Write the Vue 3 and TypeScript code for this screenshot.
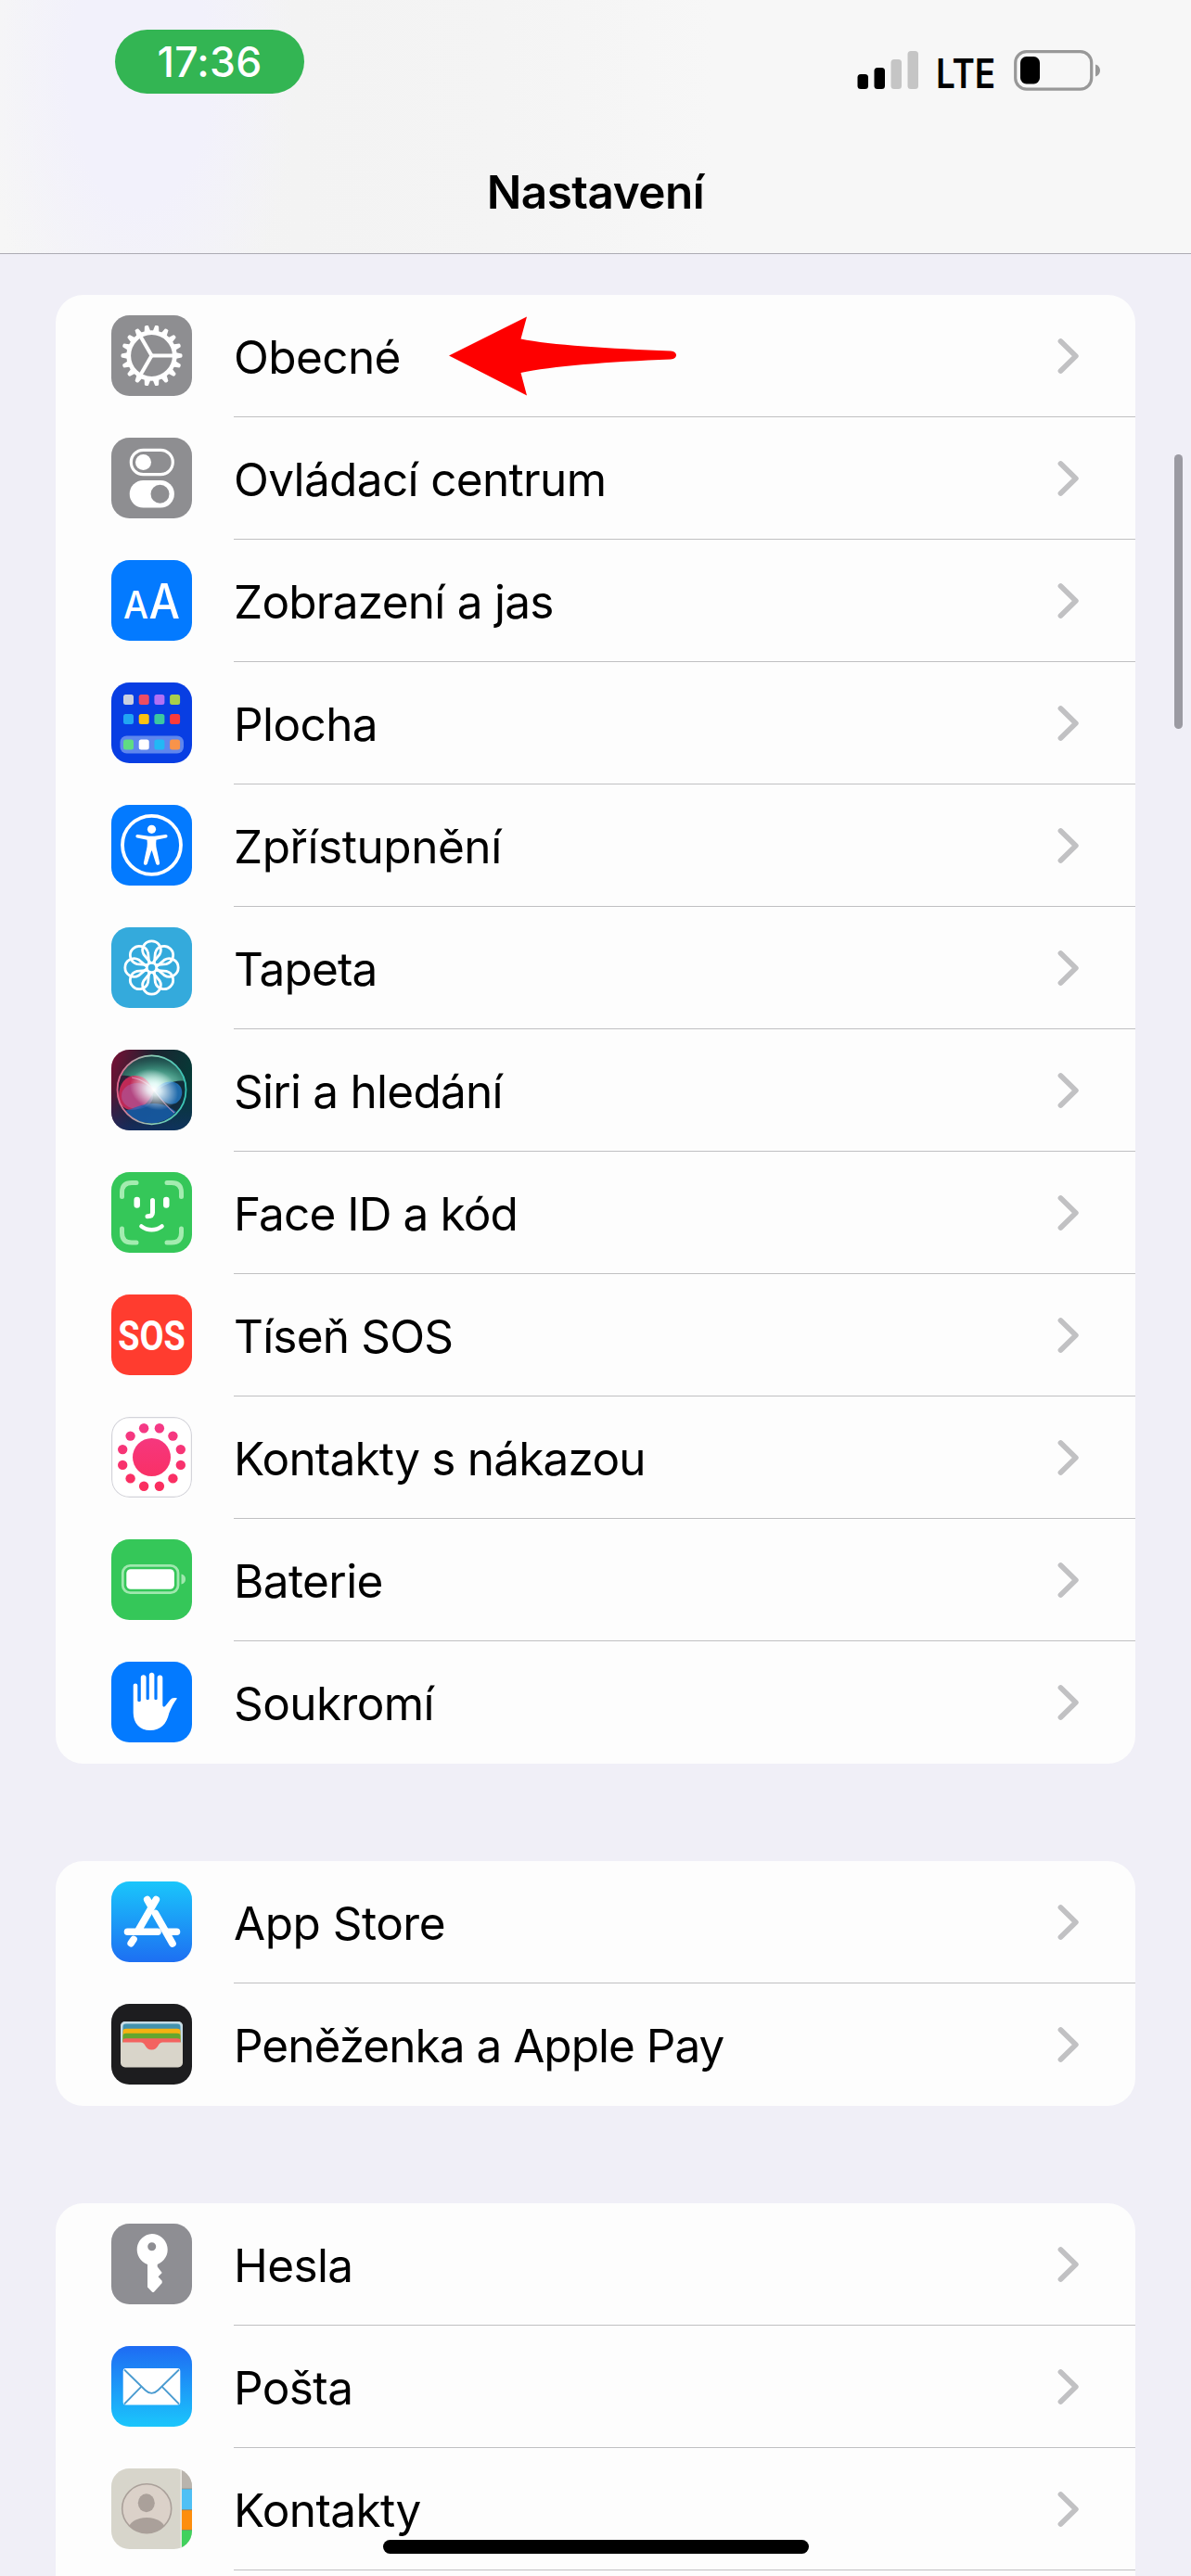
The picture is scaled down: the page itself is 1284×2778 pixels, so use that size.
<script setup lang="ts">
interface Row {
  icon: string
  label: string
  track?: number
  arrow?: boolean
}

const groups: Row[][] = [
  [
    { icon: 'gear', label: 'Obecné', arrow: true },
    { icon: 'control', label: 'Ovládací centrum', track: -0.65 },
    { icon: 'display', label: 'Zobrazení a jas', track: -0.75 },
    { icon: 'home', label: 'Plocha' },
    { icon: 'access', label: 'Zpřístupnění', track: -0.45 },
    { icon: 'wallpaper', label: 'Tapeta', track: -0.85 },
    { icon: 'siri', label: 'Siri a hledání', track: -0.75 },
    { icon: 'faceid', label: 'Face ID a kód', track: -0.9 },
    { icon: 'sos', label: 'Tíseň SOS', track: -0.8 },
    { icon: 'exposure', label: 'Kontakty s nákazou', track: -0.8 },
    { icon: 'battery', label: 'Baterie' },
    { icon: 'privacy', label: 'Soukromí' },
  ],
  [
    { icon: 'appstore', label: 'App Store', track: -0.5 },
    { icon: 'wallet', label: 'Peněženka a Apple Pay', track: -0.98 },
  ],
  [
    { icon: 'key', label: 'Hesla' },
    { icon: 'mail', label: 'Pošta' },
    { icon: 'contacts', label: 'Kontakty' },
    { icon: 'none', label: '' },
  ],
]

const range = (n: number): number[] => Array.from({ length: n }, (_, i) => i)

const appColors: string[][] = [
  ['#c9cfe0', '#ee4d62', '#b070f5', '#a8cf4c'],
  ['#21a5f3', '#fdc20f', '#3cc8a0', '#fb3a3a'],
  ['#5fdc84', '#ffffff', '#22b8f5', '#f8934a'],
]
const appRows = [13, 34, 61.5]
</script>

<template>
  <div class="screen">
    <header class="top">
      <div class="status">
        <span class="clock">17:36</span>
        <div class="indicators">
          <svg class="signal" width="66" height="42" viewBox="0 0 66 42">
            <rect x="0.5" y="26" width="11.5" height="16" rx="3.5" fill="#000" />
            <rect x="18.500" y="19" width="11.5" height="23" rx="3.5" fill="#000" />
            <rect x="36.500" y="10" width="11.5" height="32" rx="3.5" fill="#c5c5c5" />
            <rect x="54.500" y="1" width="11.5" height="41" rx="3.5" fill="#c5c5c5" />
          </svg>
          <svg class="network" width="66" height="52" viewBox="0 0 66 52">
            <text transform="translate(-1 40.500) scale(0.84 1)">LTE</text>
          </svg>
          <svg class="cell" width="95" height="44" viewBox="0 0 95 44">
            <rect x="1.700" y="1.700" width="82" height="40.500" rx="12" fill="none" stroke="#989898" stroke-width="3.2" />
            <rect x="7" y="7" width="21" height="29.500" rx="6.500" fill="#000" />
            <path d="M88 15.500c3.400 1.200 5 3.600 5 6.500s-1.600 5.300-5 6.500z" fill="#989898" />
          </svg>
        </div>
      </div>
      <h1 class="title">Nastavení</h1>
    </header>

    <main class="groups">
      <section v-for="(rows, g) in groups" :key="g" class="card">
        <div v-for="row in rows" :key="row.icon" class="row">
          <svg class="icon" width="87" height="87" viewBox="0 0 87 87">
            <defs>
              <clipPath id="tile"><rect width="87" height="87" rx="19.500" /></clipPath>
              <linearGradient id="storeBg" x2="0" y2="1">
                <stop offset="0" stop-color="#1ac6fb" /><stop offset="1" stop-color="#1d6ff2" />
              </linearGradient>
              <linearGradient id="mailBg" x2="0" y2="1">
                <stop offset="0" stop-color="#1e6bf3" /><stop offset="1" stop-color="#1bc6fc" />
              </linearGradient>
              <linearGradient id="exposureFill" x1="0" y1="6" x2="0" y2="81" gradientUnits="userSpaceOnUse">
                <stop offset="0" stop-color="#f43a88" /><stop offset="1" stop-color="#fb2d5c" />
              </linearGradient>
              <linearGradient id="siriBg" x2="1" y2="0.300">
                <stop offset="0" stop-color="#7b0f35" /><stop offset="0.5" stop-color="#1b2330" />
                <stop offset="1" stop-color="#063a37" />
              </linearGradient>
              <linearGradient id="siriBase" x2="0" y2="1">
                <stop offset="0.450" stop-color="#14264f" stop-opacity="0" /><stop offset="1" stop-color="#12306f" stop-opacity="0.700" />
              </linearGradient>
              <linearGradient id="siriRing" x2="1" y2="0">
                <stop offset="0" stop-color="#e0648c" /><stop offset="0.500" stop-color="#8fd0b8" />
                <stop offset="1" stop-color="#35c3b4" />
              </linearGradient>
              <radialGradient id="siriTop" cx="0.550" cy="0.800" r="0.900">
                <stop offset="0" stop-color="#a8eedb" /><stop offset="0.450" stop-color="#3f8f7d" />
                <stop offset="1" stop-color="#155c4e" stop-opacity="0.300" />
              </radialGradient>
              <radialGradient id="siriGlow">
                <stop offset="0" stop-color="#fff" /><stop offset="0.280" stop-color="#f4ffff" stop-opacity="0.850" />
                <stop offset="1" stop-color="#fff" stop-opacity="0" />
              </radialGradient>
            </defs>

            <g clip-path="url(#tile)">
              <template v-if="row.icon === 'gear'">
                <rect width="87" height="87" fill="#8e8e91" />
                <g fill="none" stroke="#fff">
                  <circle cx="43.500" cy="43.500" r="24.800" stroke-width="4.800" />
                  <path
                    v-for="i in range(18)" :key="i" d="M69 40L75.800 41.500c1 .8 1 3.200 0 4L69 47z" fill="#fff" stroke="none"
                    :transform="`rotate(${i * 20} 43.500 43.500)`"
                  />
                  <path
                    v-for="i in range(3)" :key="'s' + i" d="M43.500 43.500H67" stroke-width="4"
                    :transform="`rotate(${i * 120} 43.500 43.500)`"
                  />
                </g>
              </template>

              <template v-else-if="row.icon === 'control'">
                <rect width="87" height="87" fill="#8e8e91" />
                <rect x="21.300" y="13.300" width="45" height="26.400" rx="13.200" fill="none" stroke="#fff" stroke-width="3.200" />
                <circle cx="34.500" cy="26.500" r="8.500" fill="#fff" />
                <rect x="19.700" y="46" width="48.200" height="29.600" rx="14.800" fill="#fff" />
                <circle cx="52.500" cy="60.800" r="10" fill="#8e8e91" />
              </template>

              <rect v-else-if="row.icon === 'display'" width="87" height="87" fill="#037aff" />

              <template v-else-if="row.icon === 'home'">
                <rect width="87" height="87" fill="#083ee3" />
                <rect x="9.500" y="57.500" width="68.500" height="19" rx="7" fill="#5e86ee" />
                <template v-for="(colors, r) in appColors" :key="r">
                  <rect
                    v-for="(c, i) in colors" :key="i" :x="13 + i * 16.700" :y="appRows[r]"
                    width="11" height="11" rx="2.500" :fill="c"
                  />
                </template>
              </template>

              <template v-else-if="row.icon === 'access'">
                <rect width="87" height="87" fill="#037aff" />
                <circle cx="43.500" cy="43.300" r="31.500" fill="none" stroke="#fff" stroke-width="3.800" />
                <circle cx="43.500" cy="26.300" r="4.600" fill="#fff" />
                <path
                  fill="#fff"
                  d="M28.300 32l12.200 1.800h6L58.700 32c2.200-.2 2.600 3 .4 3.500l-10.600 2.300c-.8 5.500.2 9.500 1.200 13.200l2.400 11.400c.4 2.500-3 3.300-3.900 1L43.800 49.500h-.6l-4.400 13.900c-.9 2.300-4.300 1.500-3.900-1L37.300 51c1-3.700 2-7.700 1.200-13.200l-10.600-2.300c-2.200-.5-1.800-3.700.4-3.500z"
                />
              </template>

              <template v-else-if="row.icon === 'wallpaper'">
                <rect width="87" height="87" fill="#34aadc" />
                <g fill="none" stroke="#fff" stroke-width="2.800">
                  <circle cx="43.500" cy="43.500" r="5.200" />
                  <path
                    v-for="i in range(8)" :key="i" d="M42.300 38.300L35 29.500A9.800 9.800 0 1 1 52 29.500L44.700 38.300"
                    :transform="`rotate(${i * 45} 43.500 43.500)`"
                  />
                </g>
              </template>

              <template v-else-if="row.icon === 'siri'">
                <rect width="87" height="87" fill="url(#siriBg)" />
                <rect width="87" height="87" fill="url(#siriBase)" />
                <circle cx="43.500" cy="43.300" r="37" fill="#18243c" fill-opacity="0.500" />
                <path d="M10 28A37 37 0 0 1 79 34C68 32 58 38 46 45 36 36 24 26 10 28z" fill="url(#siriTop)" />
                <path d="M8 50c0-14 8-22 18-22 11 0 16 9 20 17C40 57 33 65 22 65 13 65 8 58 8 50z" fill="#d92c5c" fill-opacity="0.850" />
                <ellipse cx="28" cy="50" rx="17" ry="14" fill="#a66bb8" fill-opacity="0.450" />
                <path d="M46 45C54 34 64 33 70 36c9 4 8 18-1 22-9 3-16-4-23-13z" fill="#2686dc" fill-opacity="0.700" />
                <path d="M14 66c10-2 18-8 32-8 10 0 18 4 24 9A37 37 0 0 1 14 66z" fill="#1766b8" fill-opacity="0.750" />
                <path d="M22 30c12 2 22 10 26 16 6 8 12 16 20 22" fill="none" stroke="#e6a7cf" stroke-width="1.200" stroke-opacity="0.700" />
                <ellipse cx="46" cy="43" rx="27" ry="21" fill="url(#siriGlow)" transform="rotate(25 46 43)" />
                <circle cx="43.500" cy="43.300" r="37" fill="none" stroke="url(#siriRing)" stroke-width="1.800" />
              </template>

              <template v-else-if="row.icon === 'faceid'">
                <rect width="87" height="87" fill="#35c759" />
                <path
                  fill="none" stroke="#a3ecb0" stroke-width="5" stroke-linecap="round"
                  d="M11.500 26.500V22c0-7 3.500-10.500 10.500-10.500h5M60 11.500h5c7 0 10.500 3.500 10.500 10.500v4.500M75.500 61v4.500c0 7-3.500 10.500-10.500 10.500h-5M27 76h-5c-7 0-10.500-3.500-10.500-10.500V61"
                />
                <g fill="none" stroke="#fff" stroke-linecap="round">
                  <path d="M27.700 30v5.500M59.300 30v5.500" stroke-width="6.500" />
                  <path d="M44.500 30.500v13c0 3-1.500 4.200-5.500 4.200" stroke-width="5" />
                  <path d="M32.500 58.500c6.500 5 15.500 5 22 0" stroke-width="4.600" />
                </g>
              </template>

              <rect v-else-if="row.icon === 'sos'" width="87" height="87" fill="#ff3c2f" />

              <template v-else-if="row.icon === 'exposure'">
                <rect x="0.600" y="0.600" width="85.800" height="85.800" rx="19" fill="#fff" stroke="#d4d4da" stroke-width="1.200" />
                <g fill="url(#exposureFill)">
                  <circle cx="43.500" cy="43.500" r="20.500" />
                  <circle
                    v-for="i in range(12)" :key="i" r="5.200"
                    :cx="43.5 + 32.4 * Math.cos(((i * 30 + 15) * Math.PI) / 180)"
                    :cy="43.5 + 32.4 * Math.sin(((i * 30 + 15) * Math.PI) / 180)"
                  />
                </g>
              </template>

              <template v-else-if="row.icon === 'battery'">
                <rect width="87" height="87" fill="#35c759" />
                <rect x="12.300" y="28.300" width="59.700" height="29.400" rx="8" fill="none" stroke="#9fe8ae" stroke-width="2.800" />
                <rect x="16.300" y="32.200" width="51.600" height="21.500" rx="4.500" fill="#fff" />
                <path d="M75.500 37.500c3 .8 4.500 2.800 4.500 5.500s-1.500 4.700-4.500 5.500z" fill="#9fe8ae" />
              </template>

              <template v-else-if="row.icon === 'privacy'">
                <rect width="87" height="87" fill="#037aff" />
                <path
                  fill="#fff"
                  d="M23.700 25.700c0-3 4.600-3 4.600 0V42c0 1.500 3.500 1.500 3.500 0V17c0-3.600 5.800-3.600 5.800 0v23c0 1.500 3.200 1.500 3.200 0V14.300c0-3.500 5.600-3.500 5.600 0V40c0 1.500 3.200 1.500 3.200 0V17.200c0-3.500 5.700-3.500 5.700 0V47c.3 2 2 2.300 3.200.6l4.700-6.200c2-2.500 4.400-3 7.800-2-3.800 5-6.200 9.700-8.700 16.100C59.500 67.500 53 74 42 74c-11.500 0-18.300-7.500-18.300-19z"
                />
              </template>

              <template v-else-if="row.icon === 'appstore'">
                <rect width="87" height="87" fill="url(#storeBg)" />
                <g fill="none" stroke="#fff" stroke-width="7.600" stroke-linecap="round">
                  <path d="M38.700 19.500l4 7M48.300 19.500L29 53M17.500 54.200H50M61 54.200h9.500" />
                  <path d="M24 62.500l-2.800 4.200M47.500 34.500l18.500 32.500" />
                </g>
              </template>

              <template v-else-if="row.icon === 'wallet'">
                <rect width="87" height="87" fill="#1d1d1f" />
                <rect x="10" y="19" width="67" height="49.500" rx="5" fill="#d9d5ca" />
                <path d="M10 42V24a5 5 0 0 1 5-5h57a5 5 0 0 1 5 5v18z" fill="#c5dbe5" />
                <path d="M12.500 42V25c0-2.500 1-3.500 3.500-3.500h55c2.500 0 3.500 1 3.500 3.500v17z" fill="#4292ae" />
                <path d="M12.500 42V30c0-2.500 1-3.200 3.500-3.200h55c2.500 0 3.500.7 3.500 3.200v12z" fill="#f5b211" />
                <path d="M12.500 42V35c0-2.500 1-3.200 3.500-3.200h55c2.500 0 3.500.7 3.500 3.200v7z" fill="#64a62f" />
                <path d="M12.500 43V40c0-2 1-2.700 3.500-2.700h55c2.500 0 3.500.7 3.500 2.700v3z" fill="#f36360" />
                <path d="M10 41.500h22c2 0 3 .8 4 2.800 2 3.600 4 5.200 7.500 5.200s5.500-1.600 7.500-5.200c1-2 2-2.800 4-2.800h22v8H10z" fill="#d9d5ca" />
                <path d="M32 41.300c2 0 3 1 4 3 2 3.600 4 5.200 7.500 5.200s5.500-1.600 7.500-5.200c1-2 2-3 4-3z" fill="#f36360" />
              </template>

              <template v-else-if="row.icon === 'key'">
                <rect width="87" height="87" fill="#8e8e93" />
                <path
                  fill="#fff" fill-rule="evenodd"
                  d="M43.700 11a17 17 0 0 1 6 32.900v2.600l5 6.500-4.200 4.300 4.200 4.500v2.200l-8.500 9.500c-.8.800-1.600.8-2.400 0L39 68.500V44a17 17 0 0 1 4.700-33zm0 9.200a4.500 4.500 0 1 0 0 9 4.500 4.500 0 0 0 0-9z"
                />
              </template>

              <template v-else-if="row.icon === 'mail'">
                <rect width="87" height="87" fill="url(#mailBg)" />
                <rect x="12.700" y="24" width="61.600" height="39.500" rx="3" fill="#fff" />
                <g fill="none" stroke="#4a9bd0" stroke-width="1.800">
                  <path d="M14 25.500l22.500 22c4.500 4.300 9.500 4.300 14 0L73 25.500" />
                  <path d="M14 62.500l18.500-18.800M73 62.500L54.500 43.700" />
                </g>
              </template>

              <template v-else-if="row.icon === 'contacts'">
                <rect width="87" height="87" fill="#d7d5cb" />
                <rect x="75.700" width="11.300" height="22" fill="#b9b4ad" />
                <rect x="75.700" y="22" width="11.300" height="23" fill="#4fc0f5" />
                <rect x="75.700" y="44.700" width="11.300" height="22" fill="#fd8e0e" />
                <rect x="75.700" y="66.300" width="11.300" height="21" fill="#41d15d" />
                <path d="M75.200 0v87" stroke="#f0eee8" stroke-width="1.200" />
                <path d="M76 22h11M76 44.700h11M76 66.500h11" stroke="#7c7468" stroke-opacity="0.500" stroke-width="1.200" />
                <clipPath id="avatar"><circle cx="38.200" cy="43.300" r="26.500" /></clipPath>
                <circle cx="38.200" cy="43.300" r="26.500" fill="#dbd1c9" />
                <g clip-path="url(#avatar)" fill="#aaa09a">
                  <ellipse cx="37.800" cy="37.300" rx="9" ry="10" />
                  <ellipse cx="38.200" cy="66" rx="20" ry="13" />
                </g>
                <circle cx="38.200" cy="43.300" r="26.500" fill="none" stroke="#aaa09a" stroke-width="1.600" />
              </template>
            </g>

            <g v-if="row.icon === 'display'" class="glyph" fill="#fff">
              <text x="13" y="62.500" font-size="41" textLength="27" lengthAdjust="spacingAndGlyphs">A</text>
              <text x="40.500" y="62.500" font-size="52" textLength="33.500" lengthAdjust="spacingAndGlyphs">A</text>
            </g>
            <text v-if="row.icon === 'sos'" class="sos" transform="translate(43.500 59.800) scale(0.840 1)" text-anchor="middle" fill="#fff">SOS</text>
          </svg>

          <div class="body">
            <span class="label" :style="{ letterSpacing: (row.track ?? -0.6) + 'px' }">{{ row.label }}</span>
            <svg v-if="row.arrow" class="arrow" width="248" height="88" viewBox="0 0 248 88">
              <path
                fill="#fe0000"
                d="M1 43.500L85 1.500l-6.500 24C110 32 175 36 240 38.500c8 .5 8 8.500 0 9C175 50 110 55 78.500 62L85 86.500z"
              />
            </svg>
            <svg class="chevron" width="24" height="40" viewBox="0 0 24 40">
              <path d="M3.500 4L19.800 20 3.500 36" fill="none" stroke="#c1c1c3" stroke-width="5.800" stroke-linecap="round" stroke-linejoin="round" />
            </svg>
          </div>
        </div>
      </section>
    </main>

    <div class="scrollbar"></div>
    <div class="home-indicator"></div>
  </div>
</template>

<style>
body {
  overflow: hidden;
}
</style>

<style scoped>
.screen {
  position: relative;
  box-sizing: border-box;
  width: 1284px;
  height: 2778px;
  overflow: hidden;
  background: #f0eff7;
  color: #000;
  font-family: Inter, "Liberation Sans", sans-serif;
}

.top {
  box-sizing: border-box;
  height: 274px;
  border-bottom: 1px solid #acabb3;
  background:
    radial-gradient(ellipse 170px 320px at 150px 80px, #f2f1fb 0%, #f2f1fb 45%, rgba(243, 242, 252, 0) 100%),
    linear-gradient(90deg, #f6f6f6 0%, #f3f3f3 25%, #f4f4f4 42%, #f7f7f7 60%, #f7f7f7 100%);
}

.status {
  display: flex;
  justify-content: space-between;
  align-items: flex-start;
  height: 170px;
  padding: 32px 96px 0 124px;
  box-sizing: border-box;
}

.clock {
  width: 204px;
  height: 69px;
  border-radius: 35px;
  background: #33b553;
  color: #fff;
  font-size: 44.500px;
  font-weight: 500;
  line-height: 71px;
  text-align: center;
  letter-spacing: 0.2px;
}

.indicators {
  display: flex;
  align-items: flex-start;
  padding-top: 22px;
}

.network {
  overflow: visible;
  margin: 0 17px 0 20px;
  font-size: 44px;
  font-weight: 600;
}

.title {
  margin: 0;
  font-size: 49.500px;
  font-weight: 600;
  line-height: 74px;
  text-align: center;
  letter-spacing: -0.5px;
}

.groups {
  display: flex;
  flex-direction: column;
  gap: 105px;
  padding: 44px 60px 0;
}

.card {
  overflow: hidden;
  border-radius: 30px;
  background: #fdfdfd;
}

.row {
  display: flex;
  height: 132px;
  padding-left: 60px;
}

.icon {
  flex: none;
  overflow: visible;
  margin: 22px 45px 0 0;
}

.body {
  display: flex;
  flex: 1;
  align-items: center;
  box-sizing: border-box;
  height: 132px;
  padding-right: 60px;
  border-bottom: 1px solid #c0c0c2;
}

.row:last-child .body {
  border-bottom: 0;
}

.label {
  font-size: 49.500px;
  line-height: 60px;
  padding-top: 2px;
  white-space: nowrap;
}

.arrow {
  flex: none;
  margin-left: 51px;
}

.chevron {
  flex: none;
  margin-left: auto;
}

.glyph {
  font-family: Inter, sans-serif;
  font-weight: 500;
}

.sos {
  font-family: Roboto, sans-serif;
  font-size: 45px;
  font-weight: 700;
}

.scrollbar {
  position: absolute;
  top: 490px;
  right: 9px;
  width: 9px;
  height: 296px;
  border-radius: 5px;
  background: #9b9aa2;
}

.home-indicator {
  position: absolute;
  bottom: 24px;
  left: 413px;
  width: 459px;
  height: 15px;
  border-radius: 8px;
  background: #000;
}
</style>
